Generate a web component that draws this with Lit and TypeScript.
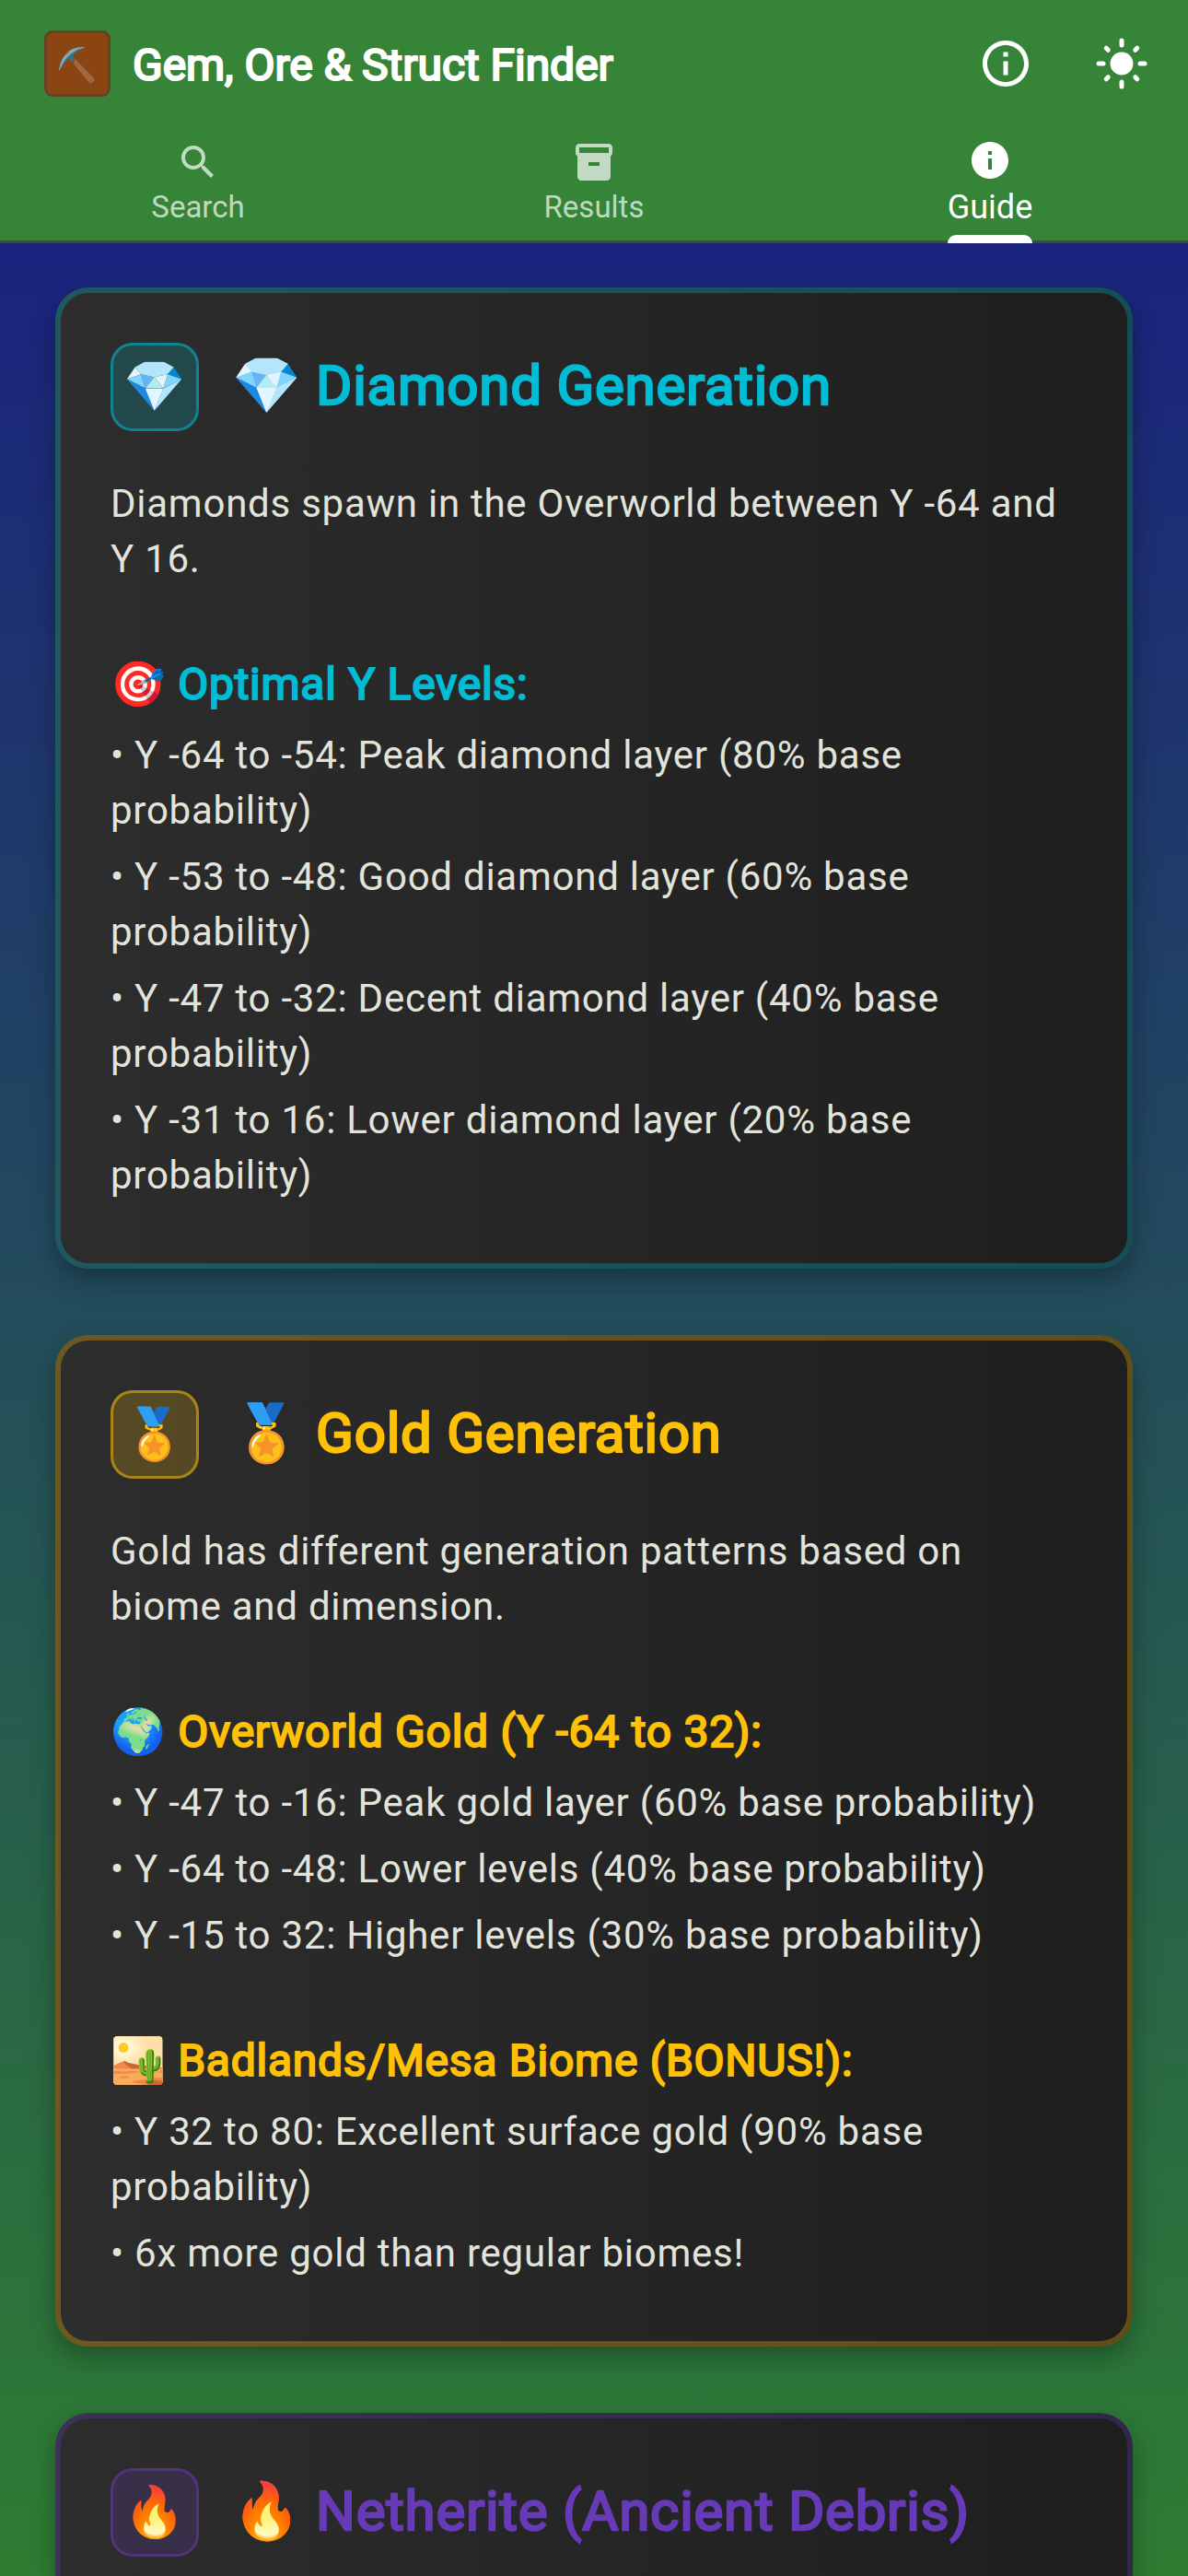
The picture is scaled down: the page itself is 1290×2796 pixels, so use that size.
import { LitElement, html, css, svg, nothing } from "lit";
import { customElement, property } from "lit/decorators.js";

interface Section {
  heading: string;
  items: string[];
}
interface Guide {
  tone: string;
  emoji: string;
  title: string;
  intro: string;
  sections: Section[];
}

const guides: Guide[] = [
  {
    tone: "diamond",
    emoji: "💎",
    title: "Diamond Generation",
    intro: "Diamonds spawn in the Overworld between Y -64 and Y 16.",
    sections: [
      {
        heading: "🎯 Optimal Y Levels:",
        items: [
          "Y -64 to -54: Peak diamond layer (80% base probability)",
          "Y -53 to -48: Good diamond layer (60% base probability)",
          "Y -47 to -32: Decent diamond layer (40% base probability)",
          "Y -31 to 16: Lower diamond layer (20% base probability)",
        ],
      },
    ],
  },
  {
    tone: "gold",
    emoji: "🏅",
    title: "Gold Generation",
    intro: "Gold has different generation patterns based on biome and dimension.",
    sections: [
      {
        heading: "🌍 Overworld Gold (Y -64 to 32):",
        items: [
          "Y -47 to -16: Peak gold layer (60% base probability)",
          "Y -64 to -48: Lower levels (40% base probability)",
          "Y -15 to 32: Higher levels (30% base probability)",
        ],
      },
      {
        heading: "🏜️ Badlands/Mesa Biome (BONUS!):",
        items: [
          "Y 32 to 80: Excellent surface gold (90% base probability)",
          "6x more gold than regular biomes!",
        ],
      },
    ],
  },
  {
    tone: "netherite",
    emoji: "🔥",
    title: "Netherite (Ancient Debris)",
    intro: "",
    sections: [],
  },
];

const icons = {
  search: svg`<path d="M15.5 14h-.79l-.28-.27C15.41 12.59 16 11.11 16 9.5 16 5.91 13.09 3 9.5 3S3 5.91 3 9.5 5.91 16 9.5 16c1.61 0 3.09-.59 4.23-1.57l.27.28v.79l5 4.99L20.49 19l-4.99-5zm-6 0C7.01 14 5 11.99 5 9.5S7.01 5 9.5 5 14 7.01 14 9.5 11.99 14 9.5 14z"/>`,
  results: svg`<path d="M20 2H4c-1 0-2 .9-2 2v3.01c0 .72.43 1.34 1 1.69V20c0 1.1 1.1 2 2 2h14c.9 0 2-.9 2-2V8.7c.57-.35 1-.97 1-1.69V4c0-1.1-1-2-2-2zm-5 12H9v-2h6v2zm5-7H4V4h16v3z"/>`,
  info: svg`<path d="M12 2C6.48 2 2 6.48 2 12s4.48 10 10 10 10-4.48 10-10S17.52 2 12 2zm1 15h-2v-6h2v6zm0-8h-2V7h2v2z"/>`,
  infoOutline: svg`<path d="M11 7h2v2h-2zm0 4h2v6h-2zm1-9C6.48 2 2 6.48 2 12s4.48 10 10 10 10-4.48 10-10S17.52 2 12 2zm0 18c-4.41 0-8-3.59-8-8s3.59-8 8-8 8 3.59 8 8-3.59 8-8 8z"/>`,
  sun: svg`<circle cx="12" cy="12" r="5"/><path fill="none" stroke="currentColor" stroke-width="2" stroke-linecap="round" d="M12 2v2M12 20v2M2 12h2M20 12h2M5.3 5.3l.8.8M17.9 17.9l.8.8M18.7 5.3l-.8.8M6.1 17.9l-.8.8"/>`,
};

@customElement("app-header")
export class AppHeader extends LitElement {
  static styles = css`
    :host {
      display: block;
      box-sizing: border-box;
      height: 264px;
      background: #358438;
      border-bottom: 3px solid #43483f;
      color: #fff;
    }
    svg {
      display: block;
      fill: currentColor;
    }
    .bar {
      display: flex;
      align-items: center;
      height: 138px;
      padding: 0 42px 0 48px;
      box-sizing: border-box;
    }
    .logo {
      display: flex;
      align-items: center;
      justify-content: center;
      box-sizing: border-box;
      width: 72px;
      height: 72px;
      padding-top: 4px;
      border: 3px solid #654321;
      border-radius: 9px;
      background: #8b4513;
      font-size: 36px;
      line-height: 40px;
    }
    .name {
      flex: 1;
      margin-left: 24px;
      padding-top: 3px;
      font-size: 48px;
      line-height: 60px;
      letter-spacing: -0.04px;
      -webkit-text-stroke: 2.2px currentColor;
    }
    .actions {
      display: flex;
      gap: 66px;
    }
    .actions svg {
      width: 60px;
      height: 60px;
    }
    .tabs {
      display: grid;
      grid-template-columns: repeat(3, 1fr);
      height: 123px;
    }
    .tab {
      display: flex;
      flex-direction: column;
      align-items: center;
      gap: 3px;
      padding-top: 14px;
      box-sizing: border-box;
      color: rgba(255, 255, 255, 0.7);
      font-size: 33px;
      line-height: 44px;
    }
    .tab svg {
      width: 48px;
      height: 48px;
      flex: none;
    }
    .tab.active {
      padding-top: 12px;
      color: #fff;
      font-size: 36px;
      line-height: 48px;
    }
    .marker {
      width: 92px;
      height: 9px;
      margin-top: 3px;
      flex: none;
      border-radius: 9px 9px 0 0;
      background: #fff;
    }
  `;

  render() {
    return html`
      <div class="bar">
        <div class="logo">⛏️</div>
        <div class="name">Gem, Ore &amp; Struct Finder</div>
        <div class="actions">
          <svg viewBox="0 0 24 24">${icons.infoOutline}</svg>
          <svg viewBox="0 0 24 24">${icons.sun}</svg>
        </div>
      </div>
      <div class="tabs">
        <div class="tab"><svg viewBox="0 0 24 24">${icons.search}</svg><span>Search</span></div>
        <div class="tab"><svg viewBox="0 0 24 24">${icons.results}</svg><span>Results</span></div>
        <div class="tab active">
          <svg viewBox="0 0 24 24">${icons.info}</svg><span>Guide</span>
          <div class="marker"></div>
        </div>
      </div>
    `;
  }
}

@customElement("guide-card")
export class GuideCard extends LitElement {
  @property({ attribute: false }) guide!: Guide;

  static styles = css`
    .card {
      --tone: 0, 188, 212;
      box-sizing: border-box;
      padding: 54px 54px 53px;
      border: 6px solid rgba(var(--tone), 0.3);
      border-radius: 36px;
      background: linear-gradient(90deg, #2d2d2d, #1e1e1e) border-box;
      box-shadow: 0 12px 28px rgba(0, 0, 0, 0.3);
      color: #e2e3da;
      font-size: 42px;
      line-height: 60px;
      letter-spacing: 0.75px;
    }
    .gold {
      --tone: 255, 193, 7;
    }
    .netherite {
      --tone: 103, 58, 183;
    }
    .head {
      display: flex;
      align-items: center;
      margin-bottom: 49px;
    }
    .badge {
      display: flex;
      align-items: center;
      justify-content: center;
      box-sizing: border-box;
      width: 96px;
      height: 96px;
      border: 3px solid rgba(var(--tone), 0.5);
      border-radius: 24px;
      background: rgba(var(--tone), 0.2);
      font-size: 54px;
      letter-spacing: 0;
    }
    .title {
      margin-left: 36px;
      padding-bottom: 3px;
      font-size: 60px;
      line-height: 72px;
      letter-spacing: 0.75px;
      color: rgb(var(--tone));
      -webkit-text-stroke: 2.4px currentColor;
    }
    .line {
      margin: 0 0 12px;
    }
    .heading {
      margin: 71px 0 13px;
      font-size: 48px;
      line-height: 69px;
      letter-spacing: 0.75px;
      color: rgb(var(--tone));
      -webkit-text-stroke: 2px currentColor;
    }
  `;

  render() {
    const g = this.guide;
    return html`
      <div class="card ${g.tone}">
        <div class="head">
          <div class="badge">${g.emoji}</div>
          <div class="title">${`${g.emoji} ${g.title}`}</div>
        </div>
        ${g.intro ? html`<p class="line">${g.intro}</p>` : nothing}
        ${g.sections.map(
          (s) => html`
            <div class="heading">${s.heading}</div>
            ${s.items.map((i) => html`<p class="line">${`• ${i}`}</p>`)}
          `
        )}
      </div>
    `;
  }
}

@customElement("app-root")
export class AppRoot extends LitElement {
  static styles = css`
    :host {
      display: flex;
      flex-direction: column;
      height: 2796px;
      overflow: hidden;
      font-family: Roboto, "Noto Color Emoji", sans-serif;
    }
    app-header {
      flex: none;
    }
    .content {
      flex: 1;
      min-height: 0;
      display: flex;
      flex-direction: column;
      gap: 72px;
      padding: 48px 60px 0;
      overflow: hidden;
      background: linear-gradient(180deg, #1a237e, #2e7d32);
    }
    guide-card {
      display: block;
      flex: none;
    }
  `;

  render() {
    return html`
      <app-header></app-header>
      <div class="content">
        ${guides.map((g) => html`<guide-card .guide=${g}></guide-card>`)}
      </div>
    `;
  }
}
